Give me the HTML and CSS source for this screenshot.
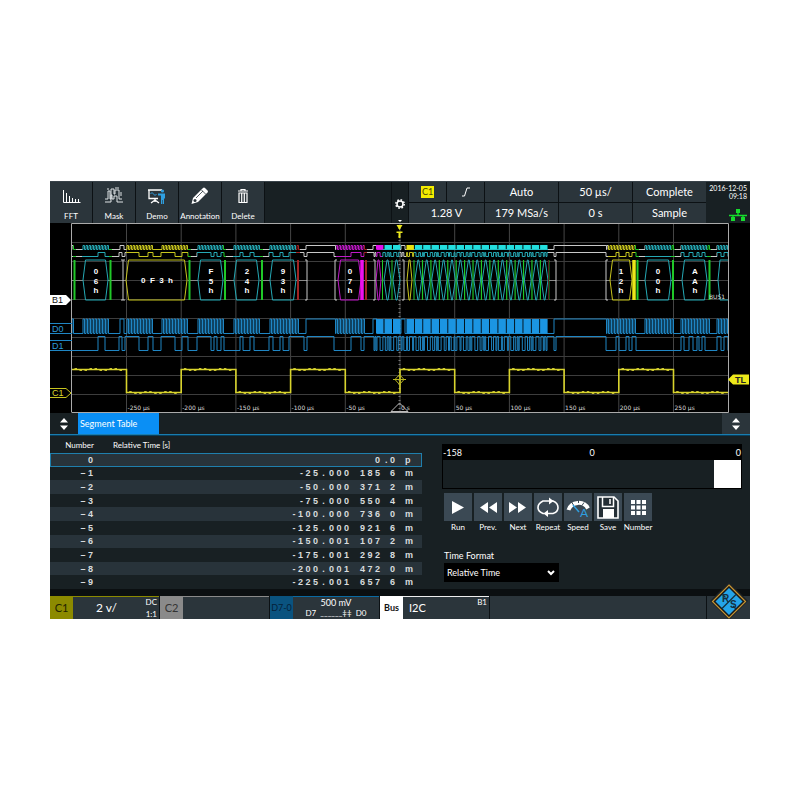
FILE: index.html
```html
<!DOCTYPE html>
<html lang="en">
<head>
<meta charset="utf-8">
<title>Oscilloscope</title>
<link rel="stylesheet" href="styles.css">
</head>
<body>
<main class="scope">
  <header class="toolbar">
    <button class="tool"><svg width="20" height="20" viewBox="0 0 20 20"><path d="M2.500 4v12.500h17M5.500 7v9M8.500 10v6M11.500 12v4M14.500 13v3M17.500 13v3" stroke="#fff" fill="none"/></svg><span>FFT</span></button>
    <button class="tool"><svg width="20" height="20" viewBox="0 0 20 20"><path d="M1 13h3V5h2v8h1V3h3v5h1V4h4v9h3M1 16h6V9h1v4h2v-3h3v6h6M3 3h2M11 2h4M17 6v4" stroke="#dfe4e6" fill="none"/></svg><span>Mask</span></button>
    <button class="tool"><svg width="20" height="20" viewBox="0 0 20 20"><path d="M1 4h14M2 4v8.500h9M8 12v4M4 17l4-3 4 3" stroke="#fff" stroke-width="1.300" fill="none"/><path d="M3.500 8q1.500-3 3 0t3 0" stroke="#2f9fe0" fill="none"/><circle cx="15.500" cy="5" r="1.600" fill="#2f9fe0"/><path d="M11 7.500h7v5h-1V18h-1.200v-4h-.6v4H14V9.500h-3z" fill="#2f9fe0"/></svg><span>Demo</span></button>
    <button class="tool"><svg width="20" height="20" viewBox="0 0 20 20"><path d="M1.500 18l1.500-6L13 2q1-1 2 0l2.500 2.500q1 1 0 2L8 16z" fill="#fff"/><path d="M11.500 4l4.500 4.500M6 12l7-7" stroke="#2b353b" fill="none" stroke-width=".8"/><circle cx="5" cy="14.500" r="1.500" fill="#2b353b"/></svg><span>Annotation</span></button>
    <button class="tool"><svg width="20" height="20" viewBox="0 0 20 20"><path d="M5 5h10M8 4.500V3.500h4v1M6 7v9.500h8V7zM8.700 7v9M11.300 7v9" stroke="#fff" stroke-width="1.200" fill="none"/></svg><span>Delete</span></button>
    <div class="spacer"></div>
    <button class="gear" aria-label="Settings"><svg width="12" height="24" viewBox="0 0 12 24"><circle cx="6" cy="6" r="4.200" fill="none" stroke="#fff" stroke-width="1.500" stroke-dasharray="1.650 1.650"/><circle cx="6" cy="6" r="3" fill="none" stroke="#fff" stroke-width="1.500"/><path d="M4 22h4l-2 2z" fill="#fff"/></svg></button>
    <div class="settings">
      <div class="cell"><b class="chip">C1</b></div>
      <div class="cell"><svg width="10" height="10" viewBox="0 0 10 10"><path d="M1 9h2.500L6 1h3" stroke="#fff" fill="none"/></svg></div>
      <div class="cell">Auto</div><div class="cell">50 µs/</div><div class="cell">Complete</div>
      <div class="cell wide">1.28 V</div><div class="cell">179 MSa/s</div><div class="cell">0 s</div><div class="cell">Sample</div>
    </div>
    <div class="clock"><time>2016-12-05<br>09:18</time><svg width="18" height="12" viewBox="0 0 18 12"><path d="M9 2v4M0 6.500h18M4 7v3M14 7v3" stroke="#16dc2d" stroke-width="1.300"/><path d="M7 0h4v4H7zM2 8h4v4H2zM12 8h4v4h-4z" fill="#16dc2d"/></svg></div>
  </header>

  <svg class="plot" id="plot" viewBox="50 223 700 190" role="img" aria-label="Waveforms"></svg>

  <nav class="tabs">
    <button class="grip" aria-label="Move panel"><svg width="8" height="12" viewBox="0 0 8 12"><path d="M0 4.500L4 0l4 4.500zM0 7.500h8L4 12z" fill="#fff"/></svg></button>
    <button class="tab">Segment Table</button>
    <button class="grip last" aria-label="Resize panel"><svg width="8" height="12" viewBox="0 0 8 12"><path d="M0 4.500L4 0l4 4.500zM0 7.500h8L4 12z" fill="#fff"/></svg></button>
  </nav>

  <section class="panel">
    <table class="segments">
      <thead><tr><th>Number</th><th class="time">Relative Time [s]</th></tr></thead>
      <tbody id="rows"></tbody>
    </table>
    <div class="player">
      <div class="range">
        <label class="scale" for="segment"><span>-158</span><span>0</span><span>0</span></label>
        <input id="segment" type="range" min="-158" max="0" value="0">
      </div>
      <div class="actions">
        <button class="action"><svg viewBox="0 0 28 28"><path d="M8 8l12 6.500L8 21z" fill="#fff"/></svg><span>Run</span></button>
        <button class="action"><svg viewBox="0 0 28 28"><path d="M14 9v11l-8-5.500zM23 9v11l-8-5.500z" fill="#fff"/></svg><span>Prev.</span></button>
        <button class="action"><svg viewBox="0 0 28 28"><path d="M5 9v11l8-5.500zM14 9v11l8-5.500z" fill="#fff"/></svg><span>Next</span></button>
        <button class="action"><svg viewBox="0 0 28 28"><path d="M10.500 20.500H9q-5-2-5-6t5-6.500h8M17.500 8H19q5 2 5 6.500t-5 6h-7" stroke="#fff" stroke-width="1.600" fill="none"/><path d="M15 4.500L19.500 8 15 11.500zM14 17v7l-4.500-3.500z" fill="#fff"/></svg><span>Repeat</span></button>
        <button class="action"><svg viewBox="0 0 28 28"><path d="M4.500 17a10.500 10 0 0 1 19.500-1.500" stroke="#fff" stroke-width="4" fill="none"/><path d="M7.500 9l2 3M14.500 7v3M20 9.500l-2 3" stroke="#3b4954"/><path d="M9 12l6 7" stroke="#2f9fe0" stroke-width="1.500"/><text x="16" y="24" fill="#2f9fe0" font-size="12">A</text></svg><span>Speed</span></button>
        <button class="action"><svg viewBox="0 0 28 28"><path d="M4 4h16l4 4v17H4z" fill="#252f36" stroke="#fff" stroke-width="1.600"/><path d="M8.500 4v9.500h11V4M16 6v5" stroke="#fff" stroke-width="1.500" fill="none"/><path d="M9 16h11v9H9z" fill="#fff"/></svg><span>Save</span></button>
        <button class="action"><svg viewBox="0 0 28 28"><path d="M7 7h4v4H7zM12.500 7h4v4h-4zM18 7h4v4h-4zM7 12.500h4v4H7zM12.500 12.500h4v4h-4zM18 12.500h4v4h-4zM7 18h4v4H7zM12.500 18h4v4h-4zM18 18h4v4h-4z" fill="#fff"/></svg><span>Number</span></button>
      </div>
      <div class="format">
        <label for="format">Time Format</label>
        <div class="select"><select id="format"><option>Relative Time</option></select><svg width="8" height="6" viewBox="0 0 8 6"><path d="M1 1l3 3 3-3" stroke="#fff" stroke-width="2" fill="none"/></svg></div>
      </div>
    </div>
  </section>

  <footer class="channels">
    <div class="name c1">C1</div>
    <div class="info info-c1"><span>2 v/</span><small>DC</small><small class="low">1:1</small></div>
    <div class="name c2">C2</div>
    <div class="info info-c2"></div>
    <div class="name dig">D7-0</div>
    <div class="info info-dig"><span class="volts">500 mV</span><span>D7 &nbsp;______‡‡&nbsp; D0</span></div>
    <div class="name bus">Bus</div>
    <div class="info info-bus"><span>I2C</span><small>B1</small></div>
    <div class="info blank"></div>
    <div class="info brand"><svg class="logo" width="38" height="38" viewBox="0 0 38 38"><path d="M19 0l19 19-19 19L0 19z" fill="#1c2226"/><path d="M19 3l16.500 16.500L19 36 2.500 19.500z" fill="#14191c" stroke="#c89431" stroke-width="1.200"/><path d="M19 6l13.500 13.500L19 33 5.500 19.500z" fill="#24a4e8"/><path d="M12.500 12.500l3 3M23 24l3 3M26 12.500l-14 14" stroke="#14303f" stroke-width="1.300"/><text class="mark" x="12" y="20">R</text><text class="mark" x="20" y="26">S</text></svg></div>
  </footer>
</main>
<script src="scope.js"></script>
</body>
</html>
```

FILE: styles.css
```css
* { box-sizing: border-box; }
body {
  margin: 0;
  min-height: 100vh;
  display: flex;
  flex-direction: column;
  justify-content: center;
  padding: 0 50px;
  background: #fff;
  color: #fff;
  font: 8px/12px Lato, "Open Sans", sans-serif;
}
button, select { font: inherit; color: inherit; border: 0; padding: 0; background: none; }
svg { display: block; }
.scope { background: #182023; overflow: hidden; }

.toolbar { display: flex; height: 42px; background: #0c1114; border-top: 1px solid #39434a; }
.tool {
  width: 42px; margin-right: 1px;
  display: flex; flex-direction: column; align-items: center; justify-content: space-between;
  padding: 4px 0 1px;
  background: #2b353b;
}
.tool span { white-space: nowrap; }
.spacer { flex: 1; background: #182023; }
.gear { width: 16px; margin: 0 1px; display: flex; align-items: flex-end; justify-content: center; padding-bottom: 1px; background: #182023; }
.settings {
  display: grid; grid-template-columns: 37px 37px repeat(3, 73px); grid-template-rows: 1fr 1fr;
  gap: 1px; font-size: 11px;
}
.settings .cell { display: flex; align-items: center; justify-content: center; background: #2b353b; }
.settings .wide { grid-column: span 2; }
.chip { background: #f4ec00; color: #4a4700; font-size: 9px; font-weight: 400; width: 13px; text-align: center; }
.clock { width: 44px; background: #182023; font-size: 7px; line-height: 8px; text-align: right; white-space: nowrap; padding: 2px 3px; display: flex; flex-direction: column; align-items: flex-end; justify-content: space-between; }

.plot { width: 100%; height: auto; background: #000; }
.plot text { fill: #ddd; font: 6px "DejaVu Sans", sans-serif; }
.plot .code { fill: #fff; font: bold 8px "Liberation Sans", sans-serif; text-anchor: middle; }
.plot .tag { font: 9px "Liberation Sans", sans-serif; }

.tabs { display: flex; height: 22px; border-bottom: 1px solid #1a7cae; font-size: 9px; }
.grip { width: 28px; display: flex; align-items: center; justify-content: center; }
.last { margin-left: auto; background: #2b353b; }
.tab { width: 81px; background: #0a8ff5; white-space: nowrap; padding: 0 2px; text-align: left; }

.panel { display: flex; height: 161px; border-bottom: 7px solid #0b0f11; border-top: 1px solid #063e5c; }
.segments { width: 372px; height: 153px; border-collapse: collapse; font: bold 9px/10px "Liberation Sans", sans-serif; }
.segments th, .segments td { padding: 0; }
.segments th { height: 17px; font: 8px/12px Lato, "Open Sans", sans-serif; text-align: right; width: 44px; }
.segments th.time { text-align: left; padding-left: 19px; width: auto; }
.segments td:first-child { text-align: right; padding-right: 1px; color: #d8dcde; }
.segments tbody tr:nth-child(odd) { background: #28333a; }
.segments tbody tr:first-child { outline: 1px solid #1f7fad; outline-offset: -1px; }
.value { display: grid; grid-template-columns: 1fr 11px 31px 30px 15px 17px; color: #d8dcde; }
.value span { white-space: pre; }
.value .int { text-align: right; }
.value .dot { text-align: center; }

.player { flex: 1; padding: 8px 8px 0 20px; }
.range { background: #000; border: 1px solid #000; height: 45px; }
.scale { display: flex; justify-content: space-between; height: 15px; line-height: 15px; font-size: 9px; }
.scale span { flex: 1; text-align: center; }
.scale span:first-child { text-align: left; }
.scale span:last-child { text-align: right; }
.range input { display: block; appearance: none; width: 100%; height: 28px; margin: 0; background: #182023; }
.range input::-webkit-slider-thumb { appearance: none; width: 27px; height: 28px; background: #fff; }
.actions { display: flex; gap: 2px; padding: 4px 2px 0; }
.action { width: 28px; display: flex; flex-direction: column; align-items: center; }
.action svg { width: 28px; height: 28px; background: #3b4954; }
.action span { white-space: nowrap; }
.format { padding: 16px 2px 0; font-size: 9px; line-height: 14px; }
.format label { display: block; }
.select { position: relative; width: 115px; height: 19px; background: #000; }
.select select { appearance: none; width: 100%; height: 100%; padding: 0 3px; }
.select svg { position: absolute; right: 4px; top: 7px; pointer-events: none; }

.channels { display: flex; height: 23px; font-size: 11px; background: #0c1114; }
.name { width: 23px; display: flex; align-items: center; justify-content: center; flex: none; }
.c1 { background: #8c8a00; color: #222200; }
.c2 { background: #8a8a8a; color: #333; }
.dig { background: #0a537f; color: #04213a; font-size: 9px; }
.bus { background: #fff; color: #111; font-size: 9px; font-weight: bold; }
.info { width: 86px; margin-right: 1px; background: #2b353b; border-top: 1px solid #8a8a8a; flex: none; position: relative; }
.info small { position: absolute; right: 2px; top: 0; font-size: 8px; line-height: 10px; }
.info .low { top: auto; bottom: 0; }
.info-c1 { border-color: #8c8a00; padding: 5px 23px; font-size: 12px; }
.info-dig { border-color: #0a6aa2; font-size: 8px; line-height: 11px; display: flex; flex-direction: column; align-items: center; white-space: nowrap; }
.volts { font-size: 9px; }
.info-bus { padding: 5px 6px; border-color: #eee; }
.info.blank { flex: 1; border-color: #2b353b; }
.info.brand { width: 43px; margin: 0; border-color: #2b353b; }
.logo { position: absolute; left: 3px; top: -15px; }
.mark { font: bold 10px "Liberation Sans", sans-serif; fill: #14303f; }
```

FILE: scope.js
```js
const plot = document.getElementById("plot");
let art = "";
const path = (d, stroke, width = 1, extra = "") => {
  art += `<path d="${d}" stroke="${stroke}" stroke-width="${width}" fill="none" ${extra}/>`;
};
const label = (x, y, text, cls = "", extra = "") => {
  art += `<text x="${x}" y="${y}" class="${cls}" ${extra}>${text}</text>`;
};

const CYAN = "#25a9b5", YELLOW = "#c8c51e", GREEN = "#20c828", MAGENTA = "#c018c8",
      RED = "#a02424", WHITE = "#c8c8c8", BLUE = "#1f86c4";

// Graticule
for (let i = 1; i < 12; i++) path(`M${71.8 + i * 54.7} 223V412`, "#454545");
for (let i = 1; i < 10; i++) path(`M72 ${223.5 + i * 19}H728`, "#3d3d3d");
path("M399.500 228V412", "#777", 2, 'stroke-dasharray="1 3"');

// Digital lines as [start, end] high spans; a burst is a run of clock pulses.
const bursts = [[72, 76], [83, 111], [127, 155], [162, 188], [198, 225], [234, 261], [270, 299], [336, 367], [607, 638], [645, 675], [681, 711], [717, 728]];
const idle = [[120, 124], [306, 335.500], [373, 377], [401, 405], [554, 606.500]];
const data = [[98, 105], [119, 122], [125, 139], [148, 153], [161, 175], [182, 188], [197, 211], [214, 217], [221, 224], [240, 243], [250, 254], [269, 273], [280, 283], [289, 304], [307, 334], [351, 361], [364, 374], [547, 554], [556, 606], [616, 619], [626, 629], [632, 636], [681, 684], [689, 693], [697, 699], [702, 705], [717, 721], [724, 728]];
const blocks = [];
for (let i = 0; i < 3; i++) blocks.push(376 + i * 8.500);
for (let i = 0; i < 17; i++) blocks.push(406.500 + i * 8.350);

const pulses = [...idle];
for (const [a, b] of bursts) for (let x = a; x + 1.500 <= b; x += 3) pulses.push([x, x + 1.500]);
pulses.sort((a, b) => a[0] - b[0]);
const dense = [];
for (let i = 0, x = 375; x < 545; i++) {
  const w = 1 + (i * 7 % 4) * 0.700;
  dense.push([x, x + w]);
  x += w + 1 + (i * 5 % 3) * 0.900;
}
const levels = (spans, high, low) =>
  `M72 ${low}` + spans.map(([a, b]) => `H${a}V${high}H${b}V${low}`).join("") + "H728";
const bits = [...data, ...dense].sort((a, b) => a[0] - b[0]);

// Bus rows take their colour from the frame underneath.
const zones = [[72, WHITE], [73, GREEN], [76, WHITE], [82, CYAN], [109, GREEN], [112, WHITE], [126, YELLOW], [188, GREEN], [191, WHITE], [197, CYAN], [223, GREEN], [226, WHITE], [233, CYAN], [260, GREEN], [263, WHITE], [269, CYAN], [296, RED], [300, WHITE], [336, MAGENTA], [364, RED], [367, WHITE], [376, MAGENTA], [382, CYAN], [400, WHITE], [406, YELLOW], [414, CYAN], [548, WHITE], [608, YELLOW], [635, GREEN], [639, WHITE], [645, CYAN], [671, GREEN], [675, WHITE], [681, CYAN], [707, GREEN], [711, WHITE], [717, CYAN], [728, CYAN]];
const stop = (x, c) => `<stop offset="${(x - 72) / 656}" stop-color="${c}"/>`;
art += '<linearGradient id="zones" gradientUnits="userSpaceOnUse" x1="72" y1="0" x2="728" y2="0">' +
  zones.slice(0, -1).map(([x, c], i) => stop(x, c) + stop(zones[i + 1][0], c)).join("") + "</linearGradient>";
path(levels(pulses, 245.5, 249.5), "url(#zones)");
path(levels(bits, 252.5, 256.5), "url(#zones)");
for (const x of blocks) {
  const c = x < 380 ? "#e010e8" : x > 405 && x < 410 ? "#e8e010" : "#22dede";
  art += `<rect x="${x}" y="245" width="7.400" height="4.500" fill="${c}"/>`;
}
path(levels(pulses, 319, 333.5), BLUE, 1);
path(levels(bits, 336.5, 350.5), BLUE, 1);
for (const x of blocks) art += `<rect x="${x}" y="319" width="7.500" height="14.500" fill="#1b95e2"/>`;

// Bus frames
path("M72 280.500H83M108 280.500H126M188 280.500H198M224 280.500H234M260 280.500H270M296 280.500H307M335 280.500H338M363 280.500H376M548 280.500H556M606 280.500H610M637 280.500H645M671 280.500H682M707 280.500H718", "#888");
const frame = (a, b, c, slant = 2.500) => {
  path(`M${a} 280L${a + slant} 260H${b - slant}L${b} 280L${b - slant} 300H${a + slant}Z`, c);
};
const frames = [[83, 108, CYAN, "06h"], [198, 223, CYAN, "F5h"], [234, 259, CYAN, "24h"], [270, 296, CYAN, "93h"], [338, 361, MAGENTA, "07h"], [610, 632, YELLOW, "12h"], [645, 671, CYAN, "00h"], [682, 707, CYAN, "AAh"]];
for (const [a, b, c, text] of frames) {
  frame(a, b, c);
  const mid = Math.round((a + b) / 2);
  [...text].forEach((ch, i) => label(mid, 274 + i * 9.500, ch, "code"));
}
frame(126, 187, YELLOW);
label(157, 283, "0&#160; F&#160; 3&#160; h", "code");
path("M728 260H720L718 280L720 300H728", CYAN);
frame(376, 381, MAGENTA, 2);
frame(384, 391, CYAN, 3);
frame(393, 400, CYAN, 3);
frame(407, 412, YELLOW, 2);
for (let i = 0; i < 16; i++) {
  const x = 418.3 + i * 8.42;
  frame(x - 3.400, x + 3.400, CYAN, 3);
  path(`M${x + 4.200} 260V300`, GREEN, 1.200);
}
for (const x of [74.5, 110.5, 189.5, 225, 262, 637.5, 673, 709.5]) path(`M${x} 260V300`, GREEN, 2);
for (const x of [382.5, 392, 414]) path(`M${x} 260V300`, GREEN, 1);
for (const x of [298, 366]) path(`M${x} 260V300`, RED, 2);
path("M548.500 260V300", "#5a2020");
path("M362 260V300", "#f010f0", 3.500);
path("M634 260V300", "#ece81a", 3.500);
path("M121 260H125M123 260V300M121 300H125M305 260H307V300H305M337 260H335V300H337M373 260H375V300H373M402 260H404V300H402M554 260H556V300H554M608 260H606V300H608", WHITE);
label(709, 299, "BUS1");

// Analog channel
let wave = "M72 369.500", ripple = "";
for (let i = 0; i < 12; i++) {
  const x = 71.8 + (i + 1) * 54.7, y = i % 2 ? 392.500 : 369.500;
  wave += `H${x}` + (i < 11 ? `V${i % 2 ? 369.500 : 392.500}` : "");
  for (let j = 0; j < 10; j++) ripple += `M${x - 52 + j * 5} ${y + (j * 3 % 4 < 2 ? -1 : 1)}h2.500`;
}
path(wave, "#d8d32c", 1.600);
path(ripple, "#f0ea3a", 0.800);
path("M399.500 374.500l4.500 5-4.500 5-4.500-5zM393 379.500h13M399.500 376v7", "#b8b41e");

// Time labels
[-250, -200, -150, -100, -50, 0, 50, 100, 150, 200, 250].forEach((t, i) =>
  label(127.500 + i * 54.700, 410, t ? t + " µs" : "0 s"));
path("M391 411.500L399.500 403L408 411.500Z", "#bbb");

// Frame and markers
path("M71.500 412V223.500H728.500V412.500H71.500", "#aaa");
art += '<path d="M396.500 225h6l-3 5zM398.500 238v-5h-2v-1.500h6v1.500h-2v5zM728 379.500l5-5h16v10h-16z" fill="#ece81a"/>';
art += '<path d="M50 295h16l5 5-5 5H50z" fill="#fff"/>';
label(52, 303, "B1", "tag", 'style="fill:#111"');
path("M50 388.500h16l5 4.500-5 4.500H50", YELLOW);
label(52, 396, "C1", "tag", 'style="fill:#d8d32c"');
path("M50 323.500H72M50 333.500H72M50 340.500H72M50 350.500H72", BLUE);
label(52, 332, "D0", "tag", 'style="fill:#2d9bd8"');
label(52, 349, "D1", "tag", 'style="fill:#2d9bd8"');
label(735, 383, "TL", "tag", 'style="fill:#222;font-weight:bold"');
plot.innerHTML = art;

// Segment list: integer part, two groups of decimals, last decimal, unit
const segments = [
  ["0", "0", "", "", "p"], ["- 2 5", "0 0 0", "1 8 5", "6", "m"], ["- 5 0", "0 0 0", "3 7 1", "2", "m"],
  ["- 7 5", "0 0 0", "5 5 0", "4", "m"], ["- 1 0 0", "0 0 0", "7 3 6", "0", "m"], ["- 1 2 5", "0 0 0", "9 2 1", "6", "m"],
  ["- 1 5 0", "0 0 1", "1 0 7", "2", "m"], ["- 1 7 5", "0 0 1", "2 9 2", "8", "m"], ["- 2 0 0", "0 0 1", "4 7 2", "0", "m"],
  ["- 2 2 5", "0 0 1", "6 5 7", "6", "m"]
];
document.getElementById("rows").innerHTML = segments.map(([int, a, b, c, unit], i) => {
  const parts = i
    ? `<span class="int">${int}</span><span class="dot">.</span><span>${a}</span><span>${b}</span><span>${c}</span><span class="unit">${unit}</span>`
    : `<span></span><span></span><span></span><span class="int">0 &nbsp;.&nbsp;</span><span>0</span><span class="unit">p</span>`;
  return `<tr><td>${i ? "– " + i : "0"}</td><td><div class="value">${parts}</div></td></tr>`;
}).join("");
```
